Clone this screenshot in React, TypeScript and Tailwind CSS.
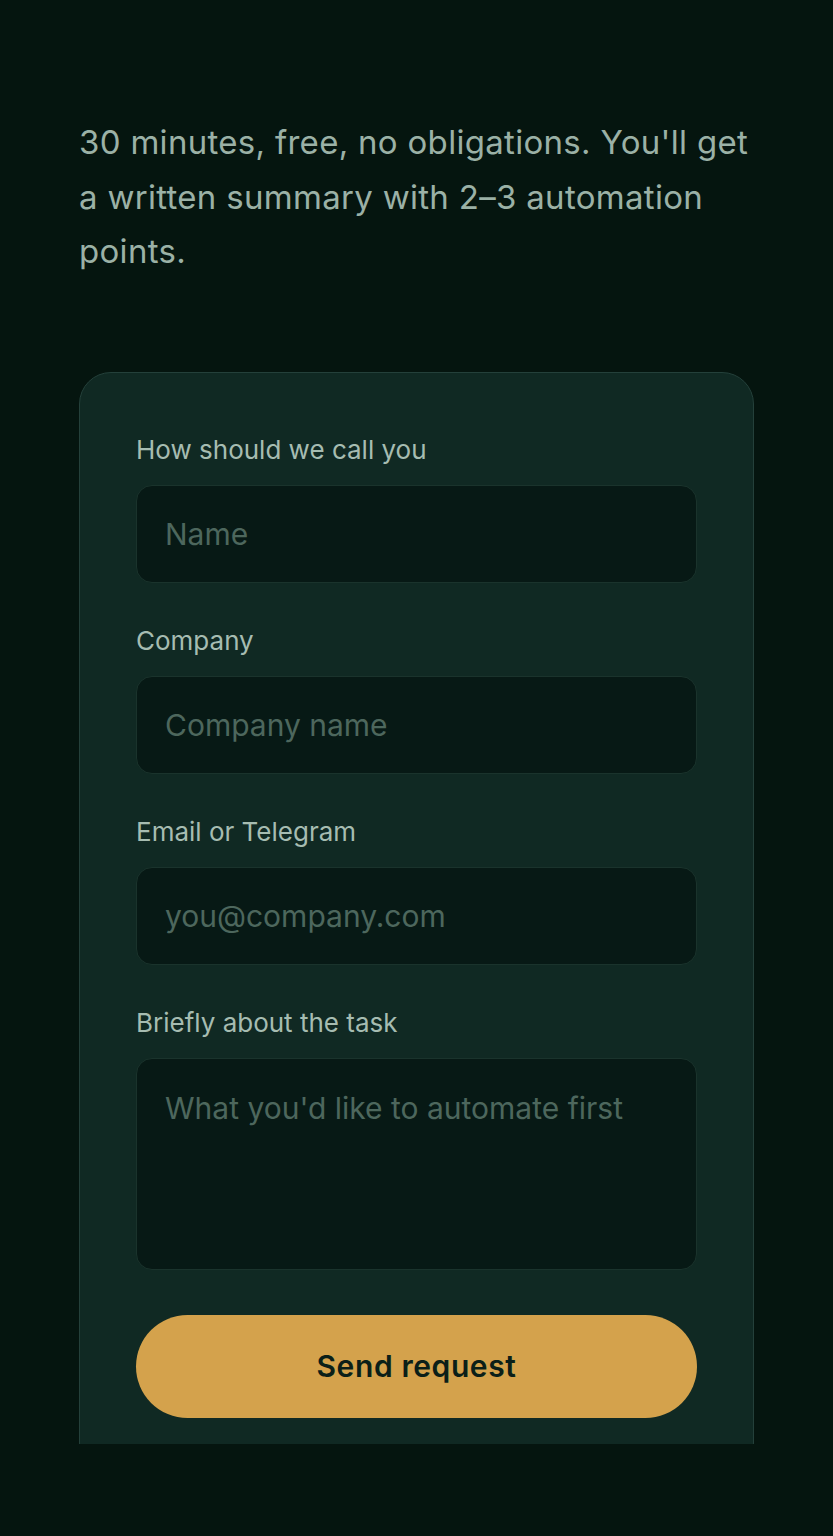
import React from "react";

const font = { fontFamily: "Inter, 'Noto Sans', sans-serif" };

function Field({ label, placeholder }: { label: string; placeholder: string }) {
  return (
    <div className="flex flex-col">
      <label className="text-[26px] leading-[36px] text-[#a6bcb1]">{label}</label>
      <input
        placeholder={placeholder}
        className="mt-[17px] h-[98px] w-full rounded-[16px] border border-[#1a332c] bg-[#071915] px-[28px] text-[30px] text-[#c9d8d0] placeholder:text-[#4d675d] outline-none"
        style={font}
      />
    </div>
  );
}

export default function App() {
  return (
    <div className="min-h-[1536px] w-full bg-[#05150f]" style={font}>
      <div className="px-[79px] pt-[115px]">
        <p className="text-[33px] leading-[54.5px] tracking-[0.3px] text-[#9bb1a6]">
          30 minutes, free, no obligations. You'll get a written summary with 2–3 automation points.
        </p>
        <div className="mt-[93px] h-[1072px] overflow-hidden">
          <div className="rounded-[32px] border border-[#24403a] bg-[#102923] px-[56px] pt-[59px] pb-[56px]">
            <div className="flex flex-col gap-[40px]">
              <Field label="How should we call you" placeholder="Name" />
              <Field label="Company" placeholder="Company name" />
              <Field label="Email or Telegram" placeholder="you@company.com" />
              <div className="flex flex-col">
                <label className="text-[26px] leading-[36px] text-[#a6bcb1]">Briefly about the task</label>
                <textarea
                  placeholder="What you'd like to automate first"
                  className="mt-[17px] h-[212px] w-full resize-none rounded-[16px] border border-[#1a332c] bg-[#071915] px-[28px] pt-[27px] text-[30px] leading-[44px] text-[#c9d8d0] placeholder:text-[#4d675d] outline-none"
                  style={font}
                />
              </div>
            </div>
            <button
              className="mt-[45px] flex h-[103px] w-full items-center justify-center rounded-full bg-[#d4a24c] text-[30px] font-semibold tracking-[0.6px] text-[#0b1f18]"
              style={font}
            >
              Send request
            </button>
          </div>
        </div>
      </div>
    </div>
  );
}
